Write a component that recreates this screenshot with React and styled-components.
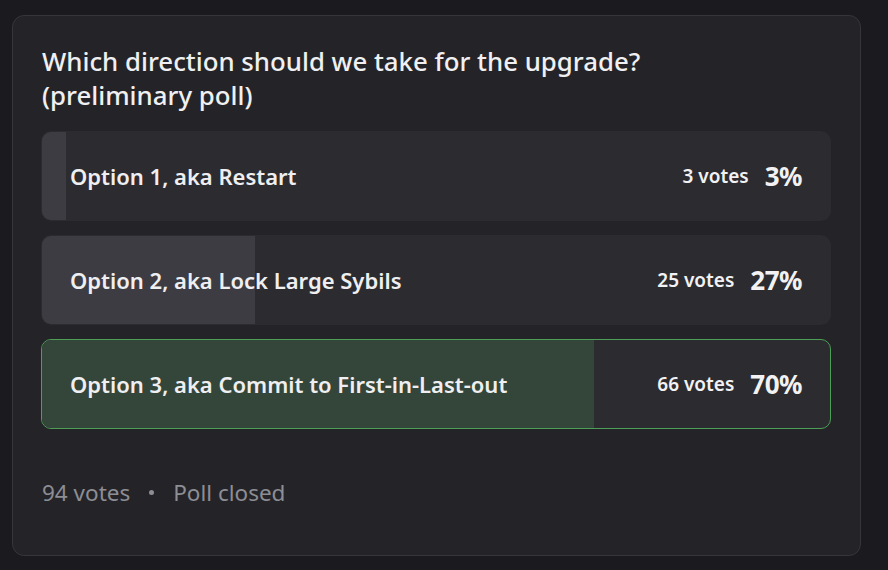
import styled, { createGlobalStyle } from 'styled-components';

const GlobalStyle = createGlobalStyle`
  html, body {
    margin: 0;
    padding: 0;
    background: #1b1b1f;
  }
  body {
    font-family: 'Noto Sans', 'Open Sans', sans-serif;
    -webkit-font-smoothing: antialiased;
  }
`;

const Page = styled.div`
  width: 888px;
  height: 570px;
  padding: 15px 27px 14px 12px;
  box-sizing: border-box;
`;

const Card = styled.div`
  height: 100%;
  box-sizing: border-box;
  background: #242428;
  border: 1px solid #35353b;
  border-radius: 12px;
  padding: 28px 29px 0 28px;
  display: flex;
  flex-direction: column;
`;

const Question = styled.h2`
  margin: 0 0 19px 1px;
  font-size: 25.8px;
  line-height: 34px;
  font-weight: 500;
  color: #f0f0f2;
`;

const Options = styled.div`
  display: flex;
  flex-direction: column;
  gap: 14px;
`;

const Option = styled.div`
  position: relative;
  height: 90px;
  box-sizing: border-box;
  border-radius: 10px;
  overflow: hidden;
  background: #2b2b30;
  border: 1px solid ${(p) => (p.$winner ? '#4d9e56' : 'transparent')};
  display: flex;
  align-items: center;
  padding: 0 28px;
`;

const Fill = styled.div`
  position: absolute;
  left: 0;
  top: 0;
  bottom: 0;
  background: ${(p) => (p.$winner ? '#34453a' : '#3c3c42')};
`;

const Label = styled.span`
  position: relative;
  flex: 1;
  font-size: 22px;
  font-weight: 600;
  color: #efeff1;
`;

const Votes = styled.span`
  position: relative;
  font-size: 19px;
  font-weight: 600;
  color: #f2f2f4;
  margin-right: 16px;
`;

const Percent = styled.span`
  position: relative;
  font-size: 26px;
  font-weight: 700;
  color: #f2f2f4;
  letter-spacing: -0.5px;
`;

const Footer = styled.div`
  margin-top: 48px;
  margin-left: 1px;
  display: flex;
  align-items: center;
  gap: 19px;
  font-size: 22.5px;
  color: #8d8d94;
`;

const Dot = styled.span`
  width: 5px;
  height: 5px;
  border-radius: 50%;
  background: #8d8d94;
`;

const options = [
  { label: 'Option 1, aka Restart', votes: 3, pct: 3 },
  { label: 'Option 2, aka Lock Large Sybils', votes: 25, pct: 27 },
  { label: 'Option 3, aka Commit to First-in-Last-out', votes: 66, pct: 70, winner: true },
];

export default function App() {
  return (
    <>
      <GlobalStyle />
      <Page>
        <Card>
          <Question>
            Which direction should we take for the upgrade?
            <br />
            (preliminary poll)
          </Question>
          <Options>
            {options.map((o) => (
              <Option key={o.label} $winner={o.winner}>
                <Fill $winner={o.winner} style={{ width: `${o.pct}%` }} />
                <Label>{o.label}</Label>
                <Votes>{o.votes} votes</Votes>
                <Percent>{o.pct}%</Percent>
              </Option>
            ))}
          </Options>
          <Footer>
            <span>94 votes</span>
            <Dot />
            <span>Poll closed</span>
          </Footer>
        </Card>
      </Page>
    </>
  );
}
